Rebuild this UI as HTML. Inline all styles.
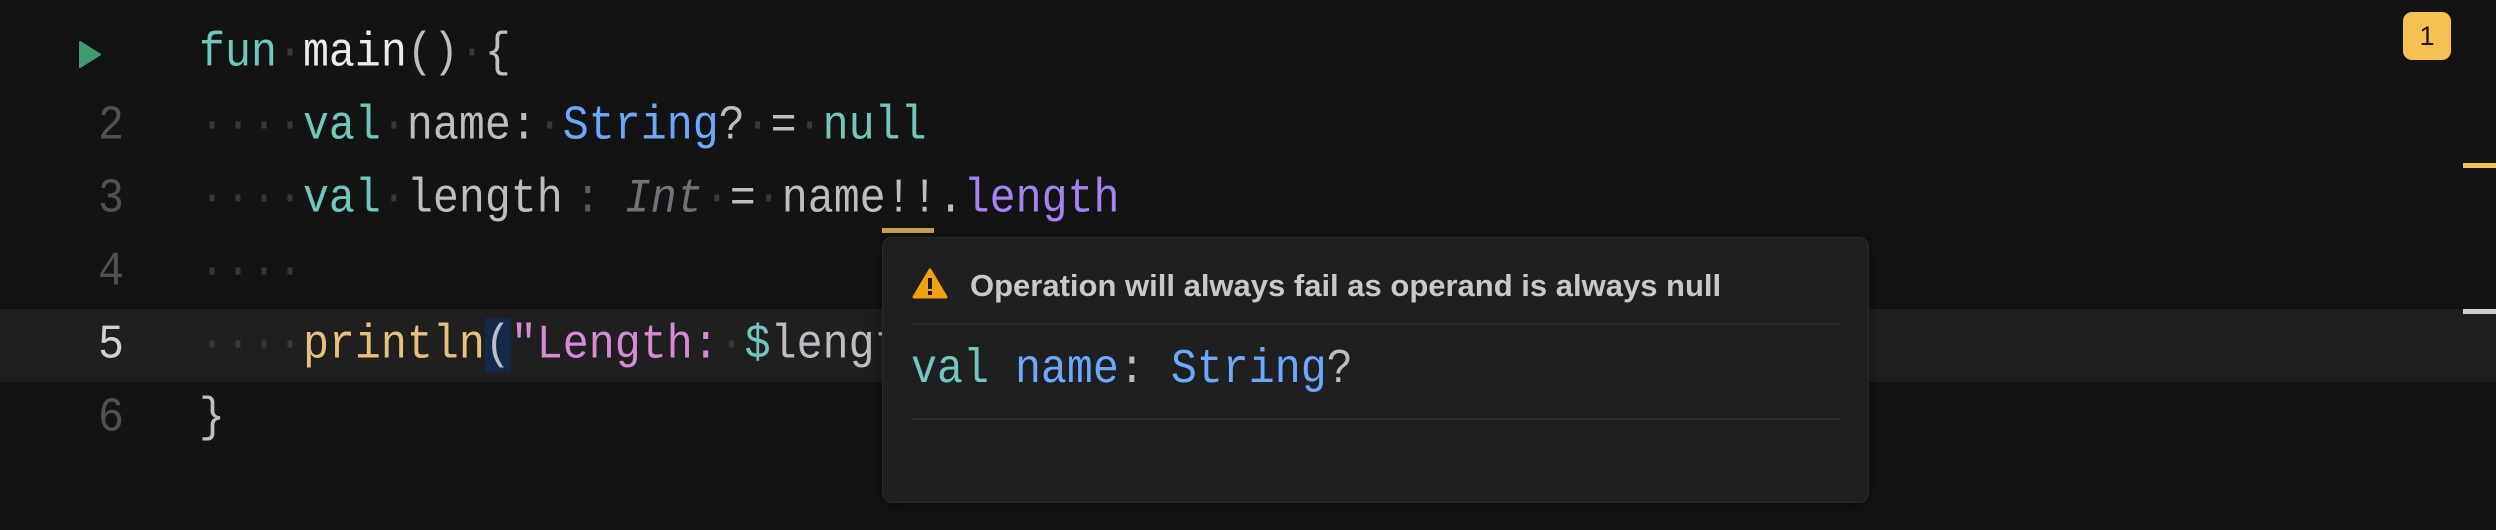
<!DOCTYPE html>
<html><head><meta charset="utf-8"><style>
html,body{margin:0;padding:0;}
body{width:2496px;height:530px;background:#131313;position:relative;overflow:hidden;font-family:"Liberation Mono",monospace;}
.line{position:absolute;left:0;width:2496px;height:73px;line-height:73px;font-size:43.3px;white-space:pre;color:#bcbec4;}
.ln{position:absolute;left:60px;width:64px;text-align:right;color:#4e5157;transform:scaleY(1.12);}
.code{position:absolute;left:199px;top:0;transform:scaleY(1.12);transform-origin:0 50%;}
.k{color:#6fc7c0}.w{color:#ececec}.t{color:#6aa9ff}.p{color:#a583f5}.f{color:#e8c07d}.s{color:#d88ad6}
.ws{color:#38393b}
.hint{display:inline-block;width:141px;position:relative;vertical-align:top;height:73px;}
</style></head><body>
<div class="line" style="top:309px;background:#1f1f1f"></div>
<svg style="position:absolute;left:78px;top:41px" width="24" height="27" viewBox="0 0 24 27"><path d="M2 1 L22 13.5 L2 26 Z" fill="#3f9c6f" stroke="#3f9c6f" stroke-width="2" stroke-linejoin="round"/></svg>
<div class="line" style="top:17px"><span class="code"><span class="k">fun</span><span class="ws">·</span><span class="w">main</span>()<span class="ws">·</span>{</span></div>
<div class="line" style="top:90px"><span class="ln">2</span><span class="code"><span class="ws">····</span><span class="k">val</span><span class="ws">·</span>name:<span class="ws">·</span><span class="t">String</span>?<span class="ws">·</span>=<span class="ws">·</span><span class="k">null</span></span></div>
<div class="line" style="top:163px"><span class="ln">3</span><span class="code"><span class="ws">····</span><span class="k">val</span><span class="ws">·</span>length<span class="hint"><span style="position:absolute;left:12px;color:#5a5d63">:</span><span style="position:absolute;left:62px;color:#6f737a;font-style:italic">Int</span></span><span class="ws">·</span>=<span class="ws">·</span>name!!.<span class="p">length</span></span></div>
<div style="position:absolute;left:882px;top:228px;width:52px;height:5px;background:#c9a34a"></div>
<div class="line" style="top:236px"><span class="ln">4</span><span class="code"><span class="ws">····</span></span></div>
<div class="line" style="top:309px"><span class="ln" style="color:#cfd1d6">5</span><span class="code"><span class="ws">····</span><span class="f">println</span><span style="background:#14284a">(</span><span class="s">"Length:</span><span class="ws">·</span><span class="k">$</span>length<span class="s">")</span></span></div>
<div class="line" style="top:382px"><span class="ln">6</span><span class="code">}</span></div>

<div style="position:absolute;left:882px;top:237px;width:985px;height:264px;background:#1f1f1f;border:1px solid #2c2c2c;border-radius:10px;box-shadow:0 4px 14px rgba(0,0,0,.4)">
 <svg style="position:absolute;left:29px;top:30px" width="36" height="31" viewBox="0 0 36 31"><path d="M18 2 L34 29 L2 29 Z" fill="#f2a20f" stroke="#f2a20f" stroke-width="3" stroke-linejoin="round"/><rect x="16" y="10" width="4" height="11" fill="#1a1a1a"/><rect x="16" y="23" width="4" height="4" fill="#1a1a1a"/></svg>
 <div style="position:absolute;left:87px;top:29px;line-height:38px;font-family:'Liberation Sans',sans-serif;font-weight:bold;font-size:31px;color:#c9c9c9;white-space:nowrap">Operation will always fail as operand is always null</div>
 <div style="position:absolute;left:28px;top:85px;width:930px;height:2px;background:#2c2c2c"></div>
 <div style="position:absolute;left:28px;top:108px;line-height:50px;font-size:43.3px;white-space:pre;color:#bcbec4;transform:scaleY(1.12)"><span class="k">val</span> <span class="t">name</span>: <span class="t">String</span>?</div>
 <div style="position:absolute;left:28px;top:180px;width:930px;height:2px;background:#2c2c2c"></div>
</div>

<div style="position:absolute;left:2403px;top:12px;width:48px;height:48px;border-radius:9px;background:#f6c152;color:#1a1a1a;font-family:'Liberation Sans',sans-serif;font-size:27px;line-height:48px;text-align:center">1</div>
<div style="position:absolute;left:2463px;top:163px;width:33px;height:5px;background:#f6c152"></div>
<div style="position:absolute;left:2463px;top:309px;width:33px;height:5px;background:#cfcfcf"></div>
</body></html>
